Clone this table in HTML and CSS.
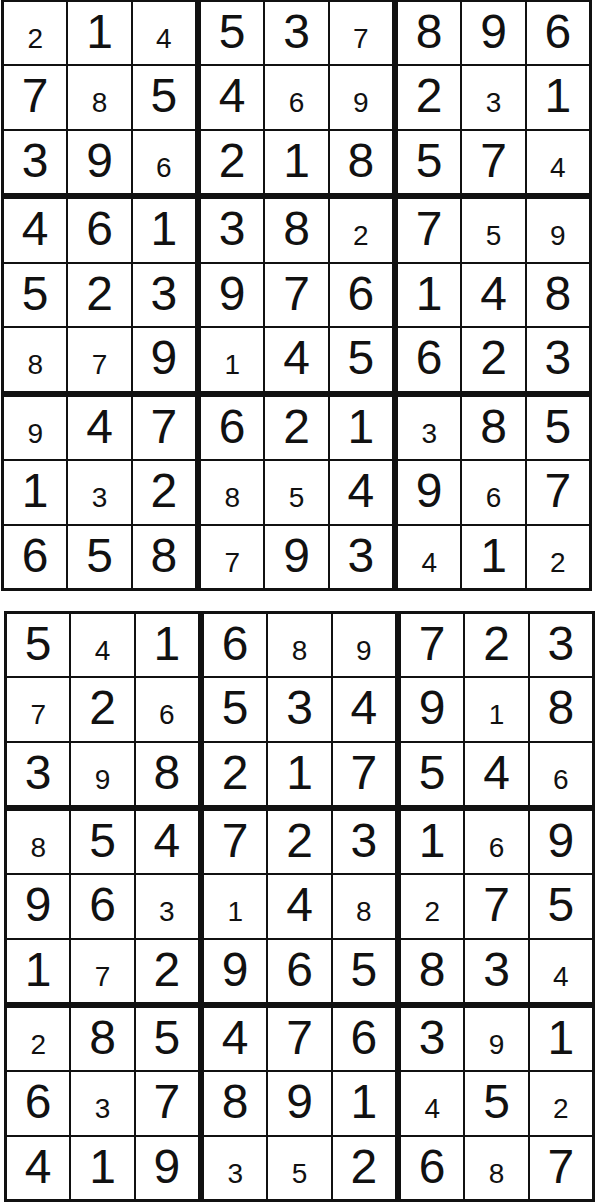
FILE: index.html
```html
<!DOCTYPE html>
<html>
<head>
  <title>Sudoku Solutions</title>
  <link rel="stylesheet" href="styles.css">
</head>
<body>
  <div class="sudoku first">
    <div class="box">
      <div class="c s">2</div><div class="c">1</div><div class="c s">4</div>
      <div class="c">7</div><div class="c s">8</div><div class="c">5</div>
      <div class="c">3</div><div class="c">9</div><div class="c s">6</div>
    </div>
    <div class="box">
      <div class="c">5</div><div class="c">3</div><div class="c s">7</div>
      <div class="c">4</div><div class="c s">6</div><div class="c s">9</div>
      <div class="c">2</div><div class="c">1</div><div class="c">8</div>
    </div>
    <div class="box">
      <div class="c">8</div><div class="c">9</div><div class="c">6</div>
      <div class="c">2</div><div class="c s">3</div><div class="c">1</div>
      <div class="c">5</div><div class="c">7</div><div class="c s">4</div>
    </div>
    <div class="box">
      <div class="c">4</div><div class="c">6</div><div class="c">1</div>
      <div class="c">5</div><div class="c">2</div><div class="c">3</div>
      <div class="c s">8</div><div class="c s">7</div><div class="c">9</div>
    </div>
    <div class="box">
      <div class="c">3</div><div class="c">8</div><div class="c s">2</div>
      <div class="c">9</div><div class="c">7</div><div class="c">6</div>
      <div class="c s">1</div><div class="c">4</div><div class="c">5</div>
    </div>
    <div class="box">
      <div class="c">7</div><div class="c s">5</div><div class="c s">9</div>
      <div class="c">1</div><div class="c">4</div><div class="c">8</div>
      <div class="c">6</div><div class="c">2</div><div class="c">3</div>
    </div>
    <div class="box">
      <div class="c s">9</div><div class="c">4</div><div class="c">7</div>
      <div class="c">1</div><div class="c s">3</div><div class="c">2</div>
      <div class="c">6</div><div class="c">5</div><div class="c">8</div>
    </div>
    <div class="box">
      <div class="c">6</div><div class="c">2</div><div class="c">1</div>
      <div class="c s">8</div><div class="c s">5</div><div class="c">4</div>
      <div class="c s">7</div><div class="c">9</div><div class="c">3</div>
    </div>
    <div class="box">
      <div class="c s">3</div><div class="c">8</div><div class="c">5</div>
      <div class="c">9</div><div class="c s">6</div><div class="c">7</div>
      <div class="c s">4</div><div class="c">1</div><div class="c s">2</div>
    </div>
  </div>

  <div class="sudoku second">
    <div class="box">
      <div class="c">5</div><div class="c s">4</div><div class="c">1</div>
      <div class="c s">7</div><div class="c">2</div><div class="c s">6</div>
      <div class="c">3</div><div class="c s">9</div><div class="c">8</div>
    </div>
    <div class="box">
      <div class="c">6</div><div class="c s">8</div><div class="c s">9</div>
      <div class="c">5</div><div class="c">3</div><div class="c">4</div>
      <div class="c">2</div><div class="c">1</div><div class="c">7</div>
    </div>
    <div class="box">
      <div class="c">7</div><div class="c">2</div><div class="c">3</div>
      <div class="c">9</div><div class="c s">1</div><div class="c">8</div>
      <div class="c">5</div><div class="c">4</div><div class="c s">6</div>
    </div>
    <div class="box">
      <div class="c s">8</div><div class="c">5</div><div class="c">4</div>
      <div class="c">9</div><div class="c">6</div><div class="c s">3</div>
      <div class="c">1</div><div class="c s">7</div><div class="c">2</div>
    </div>
    <div class="box">
      <div class="c">7</div><div class="c">2</div><div class="c">3</div>
      <div class="c s">1</div><div class="c">4</div><div class="c s">8</div>
      <div class="c">9</div><div class="c">6</div><div class="c">5</div>
    </div>
    <div class="box">
      <div class="c">1</div><div class="c s">6</div><div class="c">9</div>
      <div class="c s">2</div><div class="c">7</div><div class="c">5</div>
      <div class="c">8</div><div class="c">3</div><div class="c s">4</div>
    </div>
    <div class="box">
      <div class="c s">2</div><div class="c">8</div><div class="c">5</div>
      <div class="c">6</div><div class="c s">3</div><div class="c">7</div>
      <div class="c">4</div><div class="c">1</div><div class="c">9</div>
    </div>
    <div class="box">
      <div class="c">4</div><div class="c">7</div><div class="c">6</div>
      <div class="c">8</div><div class="c">9</div><div class="c">1</div>
      <div class="c s">3</div><div class="c s">5</div><div class="c">2</div>
    </div>
    <div class="box">
      <div class="c">3</div><div class="c s">9</div><div class="c">1</div>
      <div class="c s">4</div><div class="c">5</div><div class="c s">2</div>
      <div class="c">6</div><div class="c s">8</div><div class="c">7</div>
    </div>
  </div>
</body>
</html>
```

FILE: styles.css
```css
body { margin: 0; background: #fff; color: #111; font-family: "Liberation Sans", Arial, sans-serif; }
.sudoku { width: 591px; height: 592px; box-sizing: border-box; padding: 3px; background: #111; display: grid; grid-template-columns: repeat(3, 1fr); grid-template-rows: repeat(3, 1fr); gap: 6px; }
.first { margin: -1px 0 0 1px; }
.second { margin: 20px 0 0 4px; height: 591px; }
.box { display: grid; grid-template-columns: repeat(3, 1fr); grid-template-rows: repeat(3, 1fr); gap: 2px; min-height: 0; }
.c { background: #fff; text-align: center; font-size: 48px; line-height: 1; padding-top: 6px; min-height: 0; overflow: hidden; }
.c.s { font-size: 28px; padding-top: 23px; }
```
